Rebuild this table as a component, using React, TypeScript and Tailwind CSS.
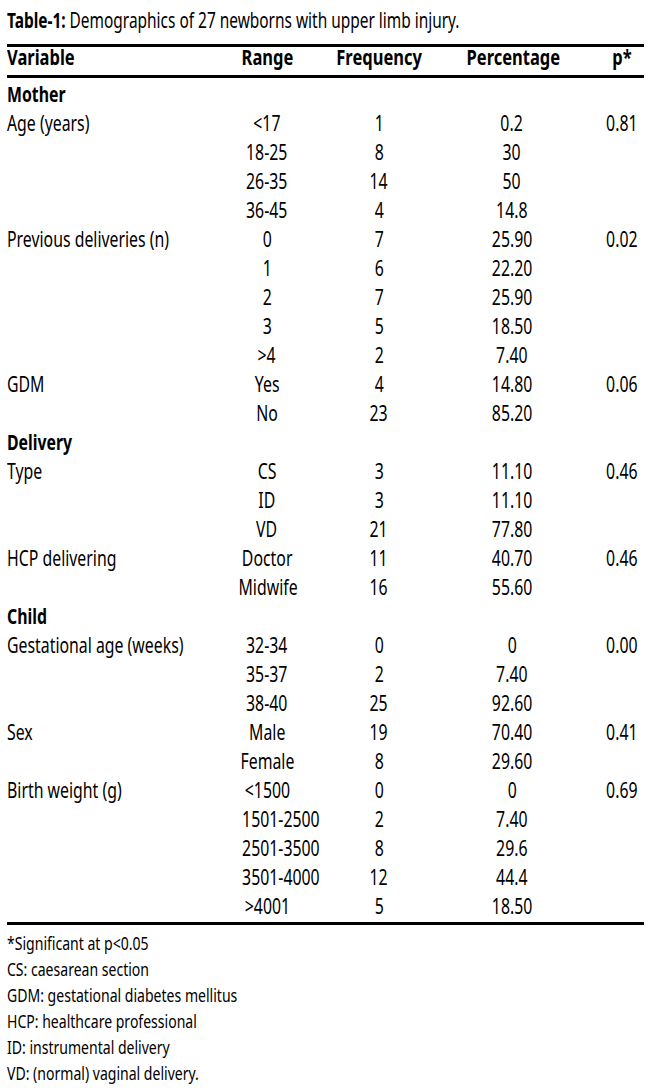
import type { ReactNode } from "react";

const rows: { label?: string; section?: boolean; range?: string; freq?: string; pct?: string; p?: string }[] = [
  { label: "Mother", section: true },
  { label: "Age (years)", range: "<17", freq: "1", pct: "0.2", p: "0.81" },
  { range: "18-25", freq: "8", pct: "30" },
  { range: "26-35", freq: "14", pct: "50" },
  { range: "36-45", freq: "4", pct: "14.8" },
  { label: "Previous deliveries (n)", range: "0", freq: "7", pct: "25.90", p: "0.02" },
  { range: "1", freq: "6", pct: "22.20" },
  { range: "2", freq: "7", pct: "25.90" },
  { range: "3", freq: "5", pct: "18.50" },
  { range: ">4", freq: "2", pct: "7.40" },
  { label: "GDM", range: "Yes", freq: "4", pct: "14.80", p: "0.06" },
  { range: "No", freq: "23", pct: "85.20" },
  { label: "Delivery", section: true },
  { label: "Type", range: "CS", freq: "3", pct: "11.10", p: "0.46" },
  { range: "ID", freq: "3", pct: "11.10" },
  { range: "VD", freq: "21", pct: "77.80" },
  { label: "HCP delivering", range: "Doctor", freq: "11", pct: "40.70", p: "0.46" },
  { range: "Midwife", freq: "16", pct: "55.60" },
  { label: "Child", section: true },
  { label: "Gestational age (weeks)", range: "32-34", freq: "0", pct: "0", p: "0.00" },
  { range: "35-37", freq: "2", pct: "7.40" },
  { range: "38-40", freq: "25", pct: "92.60" },
  { label: "Sex", range: "Male", freq: "19", pct: "70.40", p: "0.41" },
  { range: "Female", freq: "8", pct: "29.60" },
  { label: "Birth weight (g)", range: "<1500", freq: "0", pct: "0", p: "0.69" },
  { range: "1501-2500", freq: "2", pct: "7.40" },
  { range: "2501-3500", freq: "8", pct: "29.6" },
  { range: "3501-4000", freq: "12", pct: "44.4" },
  { range: ">4001", freq: "5", pct: "18.50" },
];

const notes = [
  "*Significant at p<0.05",
  "CS: caesarean section",
  "GDM: gestational diabetes mellitus",
  "HCP: healthcare professional",
  "ID: instrumental delivery",
  "VD: (normal) vaginal delivery.",
];

const cols = "grid grid-cols-[220px_80px_144px_122px_71px] whitespace-nowrap";

// the source uses a condensed face; squeeze Noto Sans horizontally to match
function Narrow({ children, left }: { children?: ReactNode; left?: boolean }) {
  return (
    <span className={left ? "inline-block scale-x-[0.72] origin-left" : "inline-block scale-x-[0.72] origin-center"}>
      {children}
    </span>
  );
}

function Cell({ children, className = "" }: { children?: ReactNode; className?: string }) {
  return (
    <div className={`text-center ${className}`}>
      <Narrow>{children}</Narrow>
    </div>
  );
}

export default function App() {
  return (
    <div className="min-h-screen bg-white text-black font-['Noto_Sans','Open_Sans',sans-serif] pl-[7px] pr-[6px] pt-[6px]">
      <p className="text-[21px] leading-[28px] whitespace-nowrap">
        <span className="inline-block scale-x-[0.735] origin-left">
          <span className="font-bold">Table-1:</span> Demographics of 27 newborns with upper limb injury.
        </span>
      </p>

      <div className="mt-[10px] border-t-[3px] border-b-[3px] border-black">
        <div className={`${cols} h-[28px] text-[22px] leading-[19px] font-bold`}>
          <div>
            <span className="inline-block scale-x-[0.75] origin-left">Variable</span>
          </div>
          <div className="text-center">
            <span className="inline-block scale-x-[0.75] origin-center">Range</span>
          </div>
          <div className="text-center">
            <span className="inline-block scale-x-[0.75] origin-center">Frequency</span>
          </div>
          <div className="text-center">
            <span className="inline-block scale-x-[0.75] origin-center">Percentage</span>
          </div>
          <div className="text-center pl-[27px]">
            <span className="inline-block scale-x-[0.75] origin-center">p*</span>
          </div>
        </div>
      </div>

      <div className="pt-[1px] border-b-[3px] border-black pb-[2px] text-[22px] leading-[29px]">
        {rows.map((r, i) => (
          <div key={i} className={`${cols} h-[29px]`}>
            <div className={r.section ? "font-bold" : ""}>
              <Narrow left>{r.label}</Narrow>
            </div>
            <Cell>{r.range}</Cell>
            <Cell>{r.freq}</Cell>
            <Cell>{r.pct}</Cell>
            <Cell className="pl-[27px]">{r.p}</Cell>
          </div>
        ))}
      </div>

      <div className="mt-[5px] text-[18px] leading-[26px] whitespace-nowrap">
        {notes.map((n) => (
          <p key={n}>
            <span className="inline-block scale-x-[0.78] origin-left">{n}</span>
          </p>
        ))}
      </div>
    </div>
  );
}
